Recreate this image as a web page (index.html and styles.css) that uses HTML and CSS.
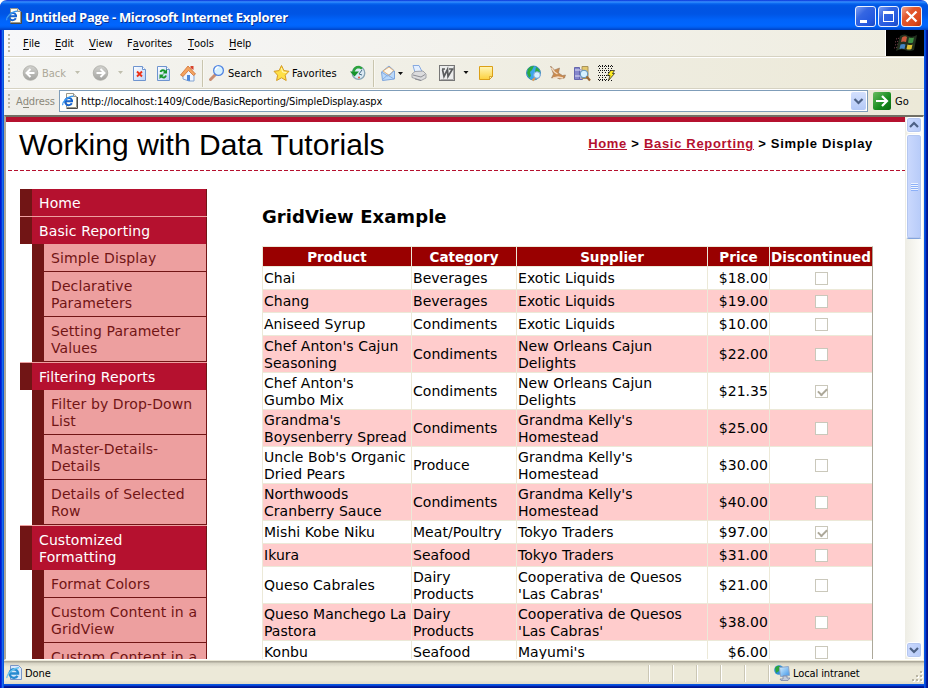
FILE: index.html
```html
<!DOCTYPE html>
<html lang="en">
<head>
<meta charset="utf-8">
<title>Untitled Page</title>
<link rel="stylesheet" href="styles.css">
</head>
<body>
<svg class="defs" width="0" height="0">
  <defs>
    <linearGradient id="gGray" x1="0" y1="0" x2="0" y2="1"><stop offset="0" stop-color="#d2d2ce"/><stop offset="1" stop-color="#a3a3a0"/></linearGradient>
    <linearGradient id="gPage" x1="0" y1="0" x2="1" y2="1"><stop offset="0" stop-color="#fff"/><stop offset="1" stop-color="#b9d2f8"/></linearGradient>
    <linearGradient id="gNote" x1="0" y1="0" x2="0" y2="1"><stop offset="0" stop-color="#fff6b8"/><stop offset="1" stop-color="#fcd03c"/></linearGradient>
    <linearGradient id="gScreen" x1="0" y1="0" x2="1" y2="1"><stop offset="0" stop-color="#d9f1ff"/><stop offset="1" stop-color="#3b93e8"/></linearGradient>
    <symbol id="iePage" viewBox="0 0 16 16">
      <path d="M4.500.5h7l3 3v11h-10z" fill="#fffef4" stroke="#99978b"/>
      <path d="M15.500 4v11.500h-11" fill="none" stroke="#4a4a45"/>
      <path d="M11.500.5v3h3" fill="#ddd" stroke="#99978b"/>
      <path d="M9.800 10.300a3.600 3.600 0 1 1 .2-3v.9H3.500" fill="none" stroke="#1763cf" stroke-width="2"/>
      <path d="M1 12.200C-.5 10 5 3.500 11.500 3.200" fill="none" stroke="#3d9af0" stroke-width="1.200"/>
    </symbol>
  </defs>
</svg>
<div class="window">
  <header class="titlebar">
    <svg class="title-icon" width="16" height="16"><use href="#iePage"/></svg>
    <span class="title-text">Untitled Page - Microsoft Internet Explorer</span>
    <div class="caption-buttons">
      <span class="cap"><svg width="19" height="19"><path d="M4 13h7v3H4z" fill="#fff"/></svg></span>
      <span class="cap"><svg width="19" height="19"><path d="M4 4h11v11H4zM5 7v7h9V7z" fill="#fff" fill-rule="evenodd"/></svg></span>
      <span class="cap close"><svg width="19" height="19"><path d="M4.500 4.500l10 10M14.500 4.500l-10 10" stroke="#fff" stroke-width="2.300"/></svg></span>
    </div>
  </header>

  <nav class="menubar">
    <span class="grip"></span>
    <span class="m-file"><u>F</u>ile</span><span class="m-edit"><u>E</u>dit</span><span class="m-view"><u>V</u>iew</span><span class="m-fav">F<u>a</u>vorites</span><span class="m-tools"><u>T</u>ools</span><span class="m-help"><u>H</u>elp</span>
    <div class="throbber">
      <svg width="38" height="26">
        <path d="M14 6q5-3 8 0 4 2 9-1l-3 15q-5 2-9 0-4-2-9 1z" fill="#23301f"/>
        <path d="M16 7.500q3-2 5-.5l-1 5q-3-1-5 0z" fill="#c9583c"/>
        <path d="M23 7.500q3 1 5 0l-1 5q-3 1-5 0z" fill="#3e8f44"/>
        <path d="M14.500 14.500q3-1 5 0l-1 4.500q-3-1-5 0z" fill="#4484c4"/>
        <path d="M21.500 14.500q3 1 5 0l-1 4.500q-3 1-5 0z" fill="#dfc133"/>
        <path d="M10 9l4-1M9 12l4-1M9 15l3-1M8 18l4-1" stroke="#7b4650" stroke-dasharray="1 1"/>
      </svg>
    </div>
  </nav>

  <div class="toolbar">
    <span class="grip"></span>
    <svg class="tools-art" width="616" height="30" viewBox="8 58 616 30">
      <!-- back and forward -->
      <circle cx="30.500" cy="73" r="7.300" fill="url(#gGray)" stroke="#aaa9a3" stroke-width=".8"/>
      <path d="M34.500 73H27M30.500 69l-4 4 4 4" fill="none" stroke="#fff" stroke-width="2"/>
      <path d="M75 71h5l-2.500 3zM118 71h5l-2.500 3z" fill="#c0bfae"/>
      <circle cx="100.500" cy="73" r="7.300" fill="url(#gGray)" stroke="#aaa9a3" stroke-width=".8"/>
      <path d="M96.500 73h7.500M100.500 69l4 4-4 4" fill="none" stroke="#fff" stroke-width="2"/>
      <!-- stop -->
      <path d="M133.500 66.500h9l3 3v11h-12z" fill="url(#gPage)" stroke="#6e94cf"/>
      <path d="M142.500 66.500v3h3" fill="#fff" stroke="#6e94cf"/>
      <path d="M137 71.500l5 5m0-5l-5 5" stroke="#ed3218" stroke-width="1.900"/>
      <!-- refresh -->
      <path d="M157.500 66.500h9l3 3v11h-12z" fill="url(#gPage)" stroke="#6e94cf"/>
      <path d="M166.500 66.500v3h3" fill="#fff" stroke="#6e94cf"/>
      <path d="M160.500 72q1-2.500 3.500-1.500l1 1M166 75.500q-1 3-4 1.500l-1-1" fill="none" stroke="#16962b" stroke-width="1.900"/>
      <path d="M167 69v4.500h-4.500zM159.500 79v-4.500h4.500z" fill="#16962b"/>
      <!-- home -->
      <path d="M183 74l6-6 5 6v7h-5l-6-2z" fill="#eef5ff" stroke="#84a5d3"/>
      <path d="M187 75h3v6l-3-.6z" fill="#4d86d9"/>
      <path d="M180.500 75l7.500-9 7.500 8-2 1.500-5-5-5.500 6z" fill="#f4a460" stroke="#ce6e34" stroke-width=".8"/>
      <path d="M190.500 66h3v4l-3-2z" fill="#d8432b"/>
      <path d="M202.500 60v27M373.500 60v27" stroke="#c9c5ae"/><path d="M203.500 60v27M374.500 60v27" stroke="#f9f8f1"/>
      <!-- search -->
      <path d="M215.500 74.500l-5 5" stroke="#c88d71" stroke-width="3" stroke-linecap="round"/>
      <circle cx="218.500" cy="70.500" r="4.900" fill="#d7f1ff" stroke="#5285e2" stroke-width="1.300"/>
      <path d="M215.500 70q.5-3 3-3" fill="none" stroke="#fff" stroke-width="1.400"/>
      <!-- favorites -->
      <path d="M281.500 65.500l2.400 5.100 5.100.7-3.800 3.900 1 5.300-4.700-2.700-4.900 2.700 1-5.300-3.600-3.900 5.100-.7z" fill="#ffe046" stroke="#d59a22"/>
      <path d="M281.500 68l1 4 4 .5" fill="none" stroke="#fffac0"/>
      <!-- history -->
      <circle cx="358.500" cy="73" r="6.300" fill="#dceaf4" stroke="#87a4b4" stroke-width="1.300"/>
      <path d="M350 71.500h9l-4.500 5z" fill="#16932c"/>
      <path d="M353.500 72q1-5 5.500-5l3 1.500" fill="none" stroke="#2ca33b" stroke-width="2.400"/>
      <path d="M359 74l3-4M359 74l3 1" stroke="#476c86"/><circle cx="359" cy="77.500" r="1" fill="#e6533d"/>
      <!-- mail -->
      <path d="M381.500 72l7.500-6 5.500 5v8l-12 1.500z" fill="#b9d9fb" stroke="#7fa6dd"/>
      <path d="M383 71l6-4 4.500 3.500-4 5z" fill="#fff8e9" stroke="#e6a55c" stroke-width=".8"/>
      <path d="M382 80l5.500-5 6.500 4M381.500 72l6 4 6.500-5" fill="none" stroke="#86abe0"/>
      <path d="M398 72h5l-2.500 3zM463.500 71h5L466 74z" fill="#111"/>
      <!-- print -->
      <path d="M413 65.500h6l3 6-7 1z" fill="#e3efff" stroke="#86a9e0"/>
      <path d="M412 74l3-2.500 8-.5 3 3v4l-5 2.500-9-3z" fill="#dcdcde" stroke="#9a9ba0" stroke-width=".9"/>
      <path d="M413 75l8 2 4-2.500M415 79l6 1.500" fill="none" stroke="#85868b" stroke-width=".9"/>
      <!-- word processor -->
      <rect x="439.500" y="65.500" width="15" height="15" fill="#eceded" stroke="#777"/>
      <path d="M440.500 79.500h13v-13" fill="none" stroke="#aaa"/>
      <path d="M442 69h3M442.500 69.500l1.500 7 3.500-7 .5 7 4.500-7.500M449 69h4.500" fill="none" stroke="#5a5c5e" stroke-width="1.700"/>
      <!-- note -->
      <path d="M479.500 66.500h13v10l-3 3h-10z" fill="url(#gNote)" stroke="#dca016"/>
      <path d="M492.500 76.500h-3v3z" fill="#fff5b0" stroke="#c98e13" stroke-width=".7"/>
      <!-- globe -->
      <circle cx="533.500" cy="73" r="7" fill="#3aa5ee" stroke="#2a7fb4" stroke-width=".8"/>
      <path d="M528 69q2-3 6-3l-2 4-2 2 1 4-2 2-2-5zM536 67q4 2 4 6l-2 2-3-3z" fill="#2dab3e"/>
      <circle cx="537" cy="75" r="3.300" fill="#d4f1ff" stroke="#7fa4d9"/><path d="M535 78l-2.500 2.500" stroke="#e09a55" stroke-width="2"/>
      <!-- fox -->
      <path d="M550.500 66l4 4 5-2-1 5 4 2.500 3-.5-1 3-5 1-4-2-4 1 2-4z" fill="#c98a4e" stroke="#9a7a60" stroke-width=".6"/>
      <path d="M551.500 68l3 4 3 2M553 78l5-1 5 1" fill="none" stroke="#f3dbc2" stroke-width="1.300"/>
      <!-- research -->
      <path d="M574.500 67.500h5v12h-5z" fill="#8587cc" stroke="#6566ad"/><path d="M579.500 69.500h3v10h-3z" fill="#a9aadd" stroke="#6566ad"/>
      <path d="M582 66.500h6v12h-6z" fill="#e4c86d" stroke="#a8925a"/><path d="M575 70h7M575 76h7" stroke="#dfdff5"/>
      <circle cx="584" cy="74" r="3.800" fill="#d5f1ff" stroke="#598dbd"/><path d="M586.500 76.500l3.500 4" stroke="#9c6834" stroke-width="2.200"/>
      <!-- binary grid -->
      <g fill="none" stroke="#111">
        <path d="M598 66.500h16M598 70.500h14M598 75.500h11M598 79.500h10" stroke-dasharray="1 1"/>
        <path d="M599 65.500h15M599 68.500h15M599 72.500h11M599 77.500h9M599 80.500h14" stroke-dasharray="1 2"/>
      </g>
      <path d="M610.500 70.500h4l-2 3h2l-6 7 1.500-5h-2.500z" fill="#ffed22" stroke="#111" stroke-width=".7"/>
    </svg>
    <span class="t-back">Back</span><span class="t-search">Search</span><span class="t-fav">Favorites</span>
  </div>

  <div class="addressbar">
    <span class="grip"></span>
    <span class="addr-label">A<u>d</u>dress</span>
    <div class="addr-box">
      <svg width="16" height="16"><use href="#iePage"/></svg>
      <span class="url">http://localhost:1409/Code/BasicReporting/SimpleDisplay.aspx</span>
      <span class="combo"><svg width="15" height="18"><path d="M3.500 7l4 4 4-4" fill="none" stroke="#4d6185" stroke-width="2.200"/></svg></span>
    </div>
    <span class="go-icon"><svg width="18" height="18"><path d="M3 9h10M9 4l5 5-5 5" fill="none" stroke="#fff" stroke-width="2.200"/></svg></span>
    <span class="go">Go</span>
  </div>

  <div class="viewport">
    <main class="page">
      <div class="page-head">
        <h1>Working with Data Tutorials</h1>
        <div class="crumbs"><a>Home</a> &gt; <a>Basic Reporting</a> &gt; <span>Simple Display</span></div>
      </div>
      <div class="dashes"></div>
      <div class="columns">
        <ul class="side">
          <li class="top">Home</li>
          <li class="top sep">Basic Reporting</li>
          <li class="sub">Simple Display</li>
          <li class="sub">Declarative<br>Parameters</li>
          <li class="sub">Setting Parameter<br>Values</li>
          <li class="top sep">Filtering Reports</li>
          <li class="sub">Filter by Drop-Down<br>List</li>
          <li class="sub">Master-Details-<br>Details</li>
          <li class="sub">Details of Selected<br>Row</li>
          <li class="top sep">Customized<br>Formatting</li>
          <li class="sub">Format Colors</li>
          <li class="sub">Custom Content in a<br>GridView</li>
          <li class="sub">Custom Content in a</li>
        </ul>
        <section class="content">
          <h2>GridView Example</h2>
          <div class="grid">
            <div class="row head"><span>Product</span><span>Category</span><span>Supplier</span><span>Price</span><span>Discontinued</span></div>
            <div class="row"><span>Chai</span><span>Beverages</span><span>Exotic Liquids</span><span>$18.00</span><span><i></i></span></div>
            <div class="row alt"><span>Chang</span><span>Beverages</span><span>Exotic Liquids</span><span>$19.00</span><span><i></i></span></div>
            <div class="row"><span>Aniseed Syrup</span><span>Condiments</span><span>Exotic Liquids</span><span>$10.00</span><span><i></i></span></div>
            <div class="row alt two"><span>Chef Anton's Cajun<br>Seasoning</span><span>Condiments</span><span>New Orleans Cajun<br>Delights</span><span>$22.00</span><span><i></i></span></div>
            <div class="row two"><span>Chef Anton's<br>Gumbo Mix</span><span>Condiments</span><span>New Orleans Cajun<br>Delights</span><span>$21.35</span><span><i class="on"></i></span></div>
            <div class="row alt two"><span>Grandma's<br>Boysenberry Spread</span><span>Condiments</span><span>Grandma Kelly's<br>Homestead</span><span>$25.00</span><span><i></i></span></div>
            <div class="row two"><span>Uncle Bob's Organic<br>Dried Pears</span><span>Produce</span><span>Grandma Kelly's<br>Homestead</span><span>$30.00</span><span><i></i></span></div>
            <div class="row alt two"><span>Northwoods<br>Cranberry Sauce</span><span>Condiments</span><span>Grandma Kelly's<br>Homestead</span><span>$40.00</span><span><i></i></span></div>
            <div class="row"><span>Mishi Kobe Niku</span><span>Meat/Poultry</span><span>Tokyo Traders</span><span>$97.00</span><span><i class="on"></i></span></div>
            <div class="row alt"><span>Ikura</span><span>Seafood</span><span>Tokyo Traders</span><span>$31.00</span><span><i></i></span></div>
            <div class="row two"><span>Queso Cabrales</span><span>Dairy<br>Products</span><span>Cooperativa de Quesos<br>'Las Cabras'</span><span>$21.00</span><span><i></i></span></div>
            <div class="row alt two"><span>Queso Manchego La<br>Pastora</span><span>Dairy<br>Products</span><span>Cooperativa de Quesos<br>'Las Cabras'</span><span>$38.00</span><span><i></i></span></div>
            <div class="row"><span>Konbu</span><span>Seafood</span><span>Mayumi's</span><span>$6.00</span><span><i></i></span></div>
          </div>
        </section>
      </div>
    </main>
    <div class="scrollbar">
      <span class="sb-btn"><svg width="14" height="14"><path d="M3 9l4-4 4 4" fill="none" stroke="#4d6185" stroke-width="2.200"/></svg></span>
      <span class="thumb"><b></b></span>
      <span class="sb-btn down"><svg width="14" height="14"><path d="M3 5l4 4 4-4" fill="none" stroke="#4d6185" stroke-width="2.200"/></svg></span>
    </div>
  </div>

  <footer class="status">
    <svg class="st-ie" width="16" height="16">
      <path d="M4.500.5h8l3 3v11h-11z" fill="#dce9fb" stroke="#7896c8"/>
      <path d="M11.500 10.800a4.300 4.300 0 1 1 .5-3.300v1H4" fill="none" stroke="#278ad0" stroke-width="2.400"/>
      <path d="M1 13C0 10 6 3.500 13 2.500" fill="none" stroke="#69c4ee" stroke-width="1.300"/>
    </svg>
    <span class="done">Done</span>
    <div class="panes"><s></s><s></s><s></s><s></s><s></s><s></s></div>
    <svg class="st-net" width="17" height="17">
      <circle cx="5" cy="5" r="4.800" fill="#2e8fd8"/><path d="M1 3q2-3 5-2L5 6 2 8z" fill="#2ea53a"/>
      <path d="M5.500 2.500l9-1 1 9-9 1z" fill="url(#gScreen)" stroke="#8fa5c4"/>
      <path d="M9 11h4v2h3l-2 2.500H7L6 14h3z" fill="#c3ccdb" stroke="#7985a5" stroke-width=".8"/>
    </svg>
    <span class="zone">Local intranet</span>
    <svg class="sizer" width="13" height="13"><g fill="#fff"><path d="M10 2h2v2h-2zM6 6h2v2H6zM10 6h2v2h-2zM2 10h2v2H2zM6 10h2v2H6zM10 10h2v2h-2z"/></g><g fill="#b8b4a2"><path d="M9 1h2v2H9zM5 5h2v2H5zM9 5h2v2H9zM1 9h2v2H1zM5 9h2v2H5zM9 9h2v2H9z"/></g></svg>
  </footer>
</div>
</body>
</html>
```
FILE: styles.css
```css
* { box-sizing: border-box; }
body {
  margin: 0;
  width: 928px;
  height: 688px;
  overflow: hidden;
  background: #fff;
  font: 11px/14px "DejaVu Sans Condensed", "DejaVu Sans", sans-serif;
  color: #000;
}
svg { display: block; flex: none; }
.defs { position: absolute; }
u { text-decoration: none; border-bottom: 1px solid currentColor; display: inline-block; line-height: 11px; }

.window {
  width: 928px;
  height: 688px;
  display: flex;
  flex-direction: column;
  padding: 0 4px 6px;
  border-radius: 7px 7px 0 0;
  overflow: hidden;
  background:
    linear-gradient(to right, #0019cf 0 1px, #0831d9 1px 2px, #166aee 2px 3px, #0855dd 3px 4px, transparent 4px) no-repeat,
    linear-gradient(to left, #00138c 0 1px, #001ea0 1px 2px, #0441d8 2px 3px, #0855dd 3px 4px, transparent 4px) no-repeat,
    linear-gradient(to top, #00138c 0 1px, #001ea0 1px 2px, #0441d8 2px 3px, #0855dd 3px 4px, #ece9d8 4px) no-repeat #ece9d8;
}

.titlebar {
  flex: none;
  height: 30px;
  margin: 0 -4px;
  padding: 0 6px;
  display: flex;
  align-items: center;
  background: linear-gradient(#0831d9 0, #3a93ff 2px, #1170f4 3px, #0058e6 5px, #0054e3 8px, #0055e5 14px, #0063fa 20px, #0066ff 25px, #0060f4 27px, #0042c4 30px);
}
.title-icon { margin-top: 2px; }
.title-text {
  margin: 4px 0 0 3px;
  font: bold 13px/18px "Open Sans", "Noto Sans", sans-serif;
  color: #fff;
  letter-spacing: -.31px;
  text-shadow: 1px 1px 0 #0a2f8f;
  white-space: nowrap;
}
.caption-buttons { margin: 3px 0 0 auto; display: flex; gap: 2px; }
.cap {
  width: 21px; height: 21px;
  border: 1px solid #e9f0ff;
  border-radius: 3px;
  background: linear-gradient(135deg, #7c9df2 0, #3566e2 35%, #2358df 75%, #1b48bf);
}
.cap.close { background: linear-gradient(135deg, #f2a58d 0, #e2582e 35%, #dd4a1d 75%, #b8330c); }

.grip {
  flex: none;
  width: 2px; height: 19px;
  background: repeating-linear-gradient(#b9b6a8 0 2px, transparent 2px 4px);
}
.menubar {
  flex: none;
  height: 28px;
  padding: 0 0 2px 4px;
  display: flex;
  align-items: center;
  background: linear-gradient(to top, #fff 0 1px, #d6d2c2 1px 2px, transparent 2px), linear-gradient(to right, #f7f7f9, #efede0);
}
.menubar span { letter-spacing: -.06px; white-space: nowrap; }
.menubar span:not(.grip) { padding-top: 2px; }
.m-file { margin-left: 13px; width: 32px; }
.m-edit { width: 34px; }
.m-view { width: 38px; }
.m-fav { width: 61px; }
.m-tools { width: 41px; }
.throbber { margin-left: auto; width: 39px; height: 26px; border-left: 1px solid #fff; background: #000; }

.toolbar {
  flex: none;
  height: 32px;
  padding: 0 0 2px 4px;
  display: flex;
  align-items: center;
  position: relative;
  background: linear-gradient(to top, #fff 0 1px, #d6d2c2 1px 2px, transparent 2px), linear-gradient(to right, #f4f4f1, #ece9d8);
}
.tools-art { margin-left: -2px; }
.toolbar span:not(.grip) { position: absolute; top: 9px; letter-spacing: 0; }
.t-back { left: 38px; color: #aca899; }
.toolbar .t-search { left: 224px; letter-spacing: -.1px; }
.t-fav { left: 288px; }

.addressbar {
  flex: none;
  height: 25px;
  padding: 0 0 3px 4px;
  display: flex;
  align-items: center;
  background: linear-gradient(to right, #efeeea, #ece9d8);
}
.addressbar .grip { height: 15px; }
.addr-label { margin-left: 6px; padding-top: 2px; width: 43px; color: #8b887a; letter-spacing: -.1px; }
.addr-box {
  width: 809px; height: 22px;
  border: 1px solid #7f9db9;
  background: #fff;
  display: flex;
  align-items: center;
  padding: 0 1px 0 2px;
}
.url { margin-left: 3px; padding-top: 2px; letter-spacing: -.115px; white-space: nowrap; }
.combo {
  margin-left: auto;
  width: 15px; height: 18px;
  border-radius: 2px;
  background: linear-gradient(#d3e0fd, #b4c9f7);
}
.go-icon { margin-left: 5px; width: 18px; height: 18px; background: linear-gradient(135deg, #68bc60, #168a1d 60%, #0b6a12); border-radius: 2px; }
.go { margin-left: 4px; padding-top: 2px; }

.viewport {
  flex: none;
  height: 545px;
  border: solid;
  border-width: 2px 1px 1px 2px;
  border-color: #716f64 #f1efe2 #fff #aca899;
  display: flex;
  background: #fff;
  overflow: hidden;
}
.page { width: 899px; height: 542px; overflow: hidden; border-top: 5px solid #b5112f; }
.page-head { height: 48px; display: flex; justify-content: space-between; padding: 0 32px 0 13px; }
h1 { margin: 6px 0 0; font: 30px/34px "Liberation Sans", Arial, sans-serif; letter-spacing: .04px; white-space: nowrap; }
.crumbs {
  margin-top: 13px;
  font: bold 13px/17px "Liberation Sans", Arial, sans-serif;
  letter-spacing: .69px;
  white-space: nowrap;
}
.crumbs a { color: #b5112f; text-decoration: underline; }
.dashes { height: 1px; margin-left: 2px; background: repeating-linear-gradient(to right, #b5112f 0 4px, transparent 4px 6px); }
.columns { display: flex; padding: 18px 0 0 14px; }

.side {
  flex: none;
  width: 187px;
  margin: 0; padding: 0;
  list-style: none;
  font: 14px/17px "DejaVu Sans", sans-serif;
  letter-spacing: .11px;
}
.side li { padding: 6px 0 4px 7px; white-space: nowrap; border-right: 1px solid #711515; }
.top { border-left: 12px solid #711515; background: #b5112f; color: #fff; }
.side .sep { position: relative; margin-top: 1px; }
.sep::before { content: ""; position: absolute; left: -12px; right: -1px; top: -1px; height: 1px; background: #eea0a0; }
.side .sub { margin-left: 12px; border-left: 12px solid #711515; border-bottom: 1px solid #711515; background: #ed9f9f; color: #711515; }

.content { margin-left: 55px; padding-top: 15px; }
h2 { margin: 0; height: 42px; font: bold 18px/26px "DejaVu Sans", sans-serif; letter-spacing: .06px; }
.grid { width: 611px; border: 1px solid #ece9d8; border-right-color: #aca899; font: 14px/17px "DejaVu Sans", sans-serif; letter-spacing: .04px; }
.row { display: grid; grid-template-columns: 149px 105px 191px 62px 102px; height: 23px; border-bottom: 1px solid #ece9d8; }
.row span { display: flex; align-items: center; padding-left: 1px; border-right: 1px solid #ece9d8; white-space: nowrap; }
.row span:last-child { border-right: 0; justify-content: center; }
.row span:nth-child(4) { justify-content: flex-end; padding-right: 1px; }
.row.two { height: 37px; }
.row.two span:nth-child(-n+3) { padding-top: 1px; }
.row.alt { background: #ffcccc; }
.row.head { height: 20px; background: #990000; color: #fff; font-weight: bold; font-size: 13.5px; letter-spacing: 0; }
.row.head span { justify-content: center; padding: 1px 0 0; }
.row i { width: 13px; height: 13px; border: 1px solid #cac8bb; background: #fff; }
.row i.on::after { content: ""; display: block; width: 7px; height: 4px; margin: 2px 0 0 2px; border: solid #aca899; border-width: 0 0 2px 2px; transform: rotate(-45deg); }

.scrollbar { width: 18px; display: flex; flex-direction: column; align-items: center; padding: 0 0 1px; background: linear-gradient(to right, #eeede5, #fefefb); }
.sb-btn, .thumb { flex: none; width: 16px; border: 1px solid #fff; border-radius: 3px; background: linear-gradient(to right, #cbd9fd, #b7cbf9); box-shadow: inset 0 0 0 1px #b5c7f0; }
.sb-btn { height: 16px; }
.thumb { height: 105px; margin-top: 1px; display: flex; align-items: center; justify-content: center; border-bottom-color: #83a4dc; }
.thumb b { width: 7px; height: 8px; background: repeating-linear-gradient(#eef4fe 0 1px, #8cb0f8 1px 2px); }
.down { margin-top: auto; }

.status {
  flex: none;
  height: 24px;
  padding: 2px 0 0 2px;
  display: flex;
  align-items: center;
  background: linear-gradient(#ece9d8 0 1px, #aca899 1px 2px, #d5d2c2 3px, #ece9d8 7px, #ece9d8 20px, #dedac8);
}
.done { margin: 2px 0 0 3px; width: 100px; letter-spacing: -.1px; }
.panes { margin-left: 523px; display: flex; gap: 22px; }
.panes s { width: 2px; height: 17px; background: linear-gradient(to right, #cbc7b5 0 1px, #fff 1px); }
.st-net { margin-left: 4px; }
.zone { margin: 2px 0 0 2px; letter-spacing: -.1px; white-space: nowrap; }
.sizer { margin: 6px 0 0 auto; }
```
